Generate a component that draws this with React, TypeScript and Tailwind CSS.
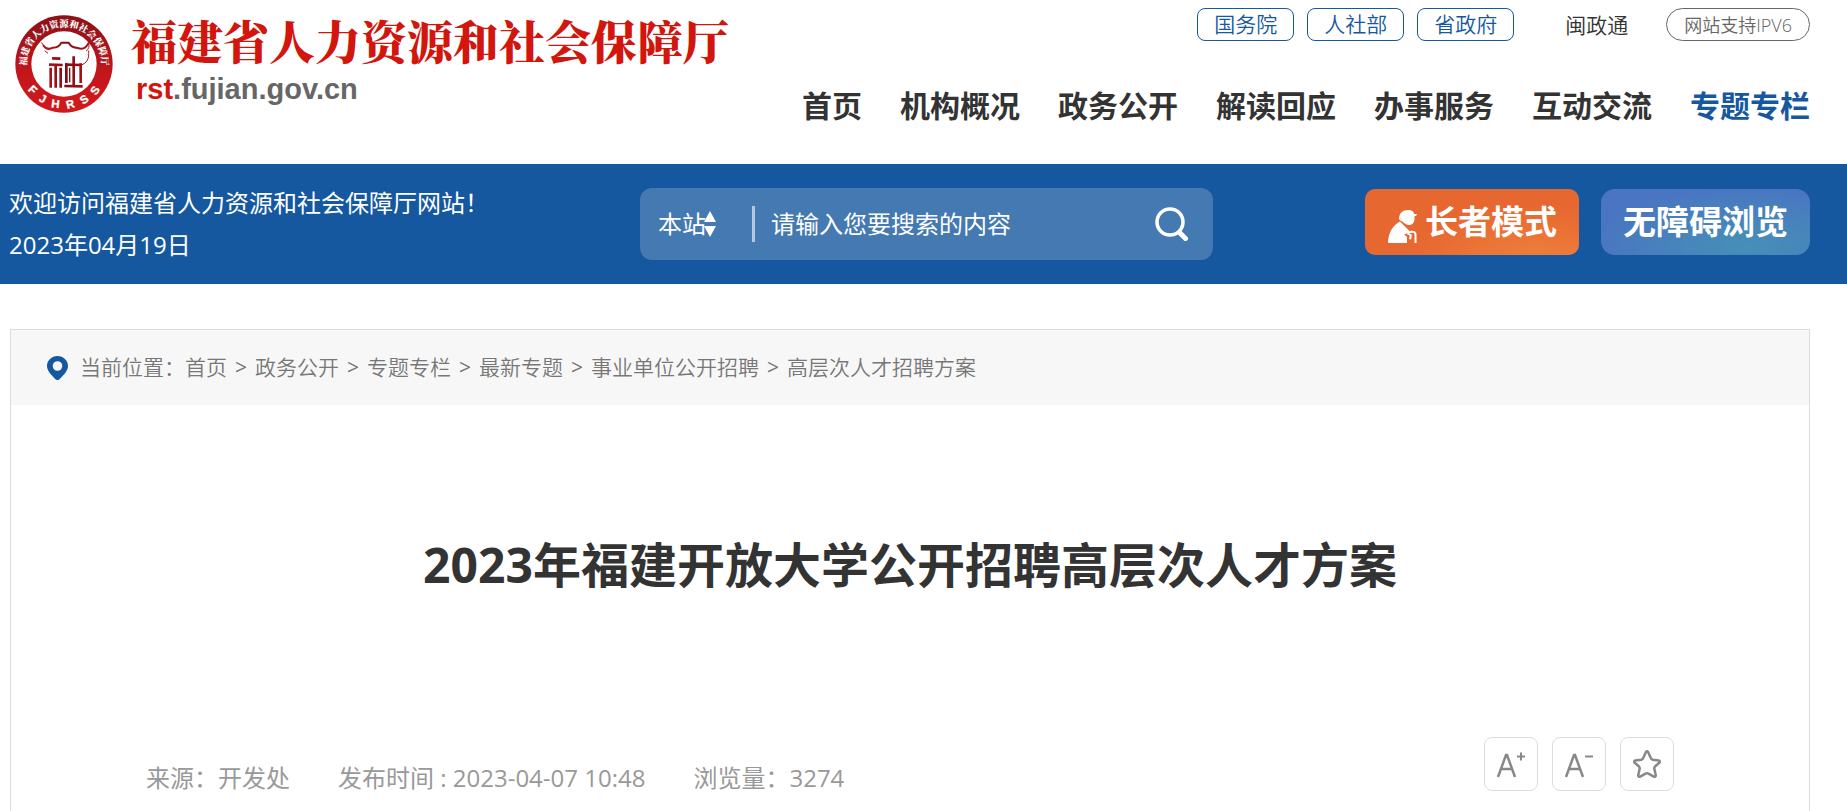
import { useState } from 'react'
import clsx from 'clsx'

const DEPARTMENTS = ['国务院', '人社部', '省政府']

const NAV_ITEMS = ['首页', '机构概况', '政务公开', '解读回应', '办事服务', '互动交流', '专题专栏']

const CRUMBS = ['首页', '政务公开', '专题专栏', '最新专题', '事业单位公开招聘', '高层次人才招聘方案']

const META = ['来源：开发处', '发布时间 : 2023-04-07 10:48', '浏览量：3274']

function Emblem() {
  return (
    <svg viewBox="8 14 294 294" className="size-[98px] shrink-0" aria-hidden="true">
      <defs>
        <linearGradient id="ring" x1="0" y1="0" x2="0" y2="1">
          <stop offset="0" stopColor="#8a1119" />
          <stop offset="0.6" stopColor="#c4161c" />
          <stop offset="1" stopColor="#d01a1c" />
        </linearGradient>
        <linearGradient id="gate" gradientUnits="userSpaceOnUse" x1="85" y1="0" x2="235" y2="0">
          <stop offset="0" stopColor="#c4161c" />
          <stop offset="0.5" stopColor="#7d0d14" />
          <stop offset="1" stopColor="#b3141a" />
        </linearGradient>
        <path id="arc-top" d="M44.700 180.400 A112 112 0 1 1 265.300 180.400" />
        <path id="arc-bottom" d="M22 161 A133 133 0 0 0 288 161" />
      </defs>
      <circle cx="155" cy="161" r="146" fill="url(#ring)" />
      <circle cx="155" cy="161" r="98" fill="#fff" />
      <text fill="#fff" fontSize="28" fontWeight="900" fontFamily="'Noto Serif CJK SC', 'Noto Sans CJK SC', serif">
        <textPath href="#arc-top" startOffset="50%" textAnchor="middle">福建省人力资源和社会保障厅</textPath>
      </text>
      <text fill="#fff" stroke="#fff" strokeWidth="1" fontSize="34" fontWeight="700" fontFamily="'Liberation Sans', sans-serif" letterSpacing="24">
        <textPath href="#arc-bottom" startOffset="53%" textAnchor="middle">FJHRSS</textPath>
      </text>
      {/* Roof */}
      <g fill="none" stroke="url(#gate)" strokeLinecap="round" strokeLinejoin="round">
        <path strokeWidth="6" d="M94 106 C100 116 110 118 122 112 C134 112 143 106 147 97 H169 C174 106 182 112 196 113 C210 118 222 112 228 99" />
        <path strokeWidth="3" d="M88 97 L96 110 M229 97 C232 108 229 117 222 122 M229 122 C231 146 224 158 207 164 M98 122 L106 128" />
      </g>
      {/* Pillars */}
      <g stroke="url(#gate)" strokeWidth="8">
        <line x1="119" y1="144" x2="144" y2="145" />
        <line x1="110" y1="163" x2="151" y2="164" />
        <line x1="115" y1="172" x2="115.1" y2="232" />
        <line x1="130" y1="163" x2="130.1" y2="232" />
        <line x1="145" y1="172" x2="145.1" y2="232" />
        <line x1="162" y1="159" x2="162.1" y2="218" />
        <line x1="184" y1="138" x2="184.1" y2="228" />
        <line x1="205" y1="159" x2="205.1" y2="218" />
        <line x1="158" y1="163" x2="209" y2="164" />
        <line x1="156" y1="227" x2="211" y2="228" />
        <line x1="172" y1="172" x2="172.1" y2="216" strokeWidth="4" />
      </g>
    </svg>
  )
}

function SearchIcon() {
  return (
    <svg viewBox="0 0 34 34" className="size-[34px]" fill="none" stroke="currentColor" aria-hidden="true">
      <circle cx="15" cy="15" r="13" strokeWidth="3.500" />
      <path d="M24.500 25.500 L30.500 31.500" strokeWidth="5" strokeLinecap="round" />
    </svg>
  )
}

function ElderIcon() {
  return (
    <svg viewBox="0 -8 30 42" className="h-[42px] w-[30px]" fill="currentColor" aria-hidden="true">
      <path d="M12 10 C12 4 16 1 21 1 C25 1 27 3 27 5 H30 L29 7 H27.500 V11 C27 14 25 16 22 16 C19 16 17 14 15.500 12.500 L13 11.500 Z" />
      <path d="M13 12.500 C6 16 1 24 1 34 H20 V28 L17 25 C21 25 22 24 22.500 22 Z" />
      <path d="M21.500 26 V24.500 C22 22 28 22 28.500 25 V34 M23.500 25 V29 L22.500 30" fill="none" stroke="currentColor" strokeWidth="2" />
    </svg>
  )
}

function PinIcon() {
  return (
    <svg viewBox="0 0 21 24" className="h-6 w-[21px]" aria-hidden="true">
      <path fill="#15589f" fillRule="evenodd" d="M10.500 0 C4.700 0 0 4.500 0 10 C0 15 4.500 19 8.500 23.200 C9.600 24.300 11.400 24.300 12.500 23.200 C16.500 19 21 15 21 10 C21 4.500 16.300 0 10.500 0 Z M10.500 5.200 A4.800 4.800 0 1 1 10.500 14.800 A4.800 4.800 0 1 1 10.500 5.200 Z" />
    </svg>
  )
}

function FontSizeIcon({ plus }: { plus?: boolean }) {
  return (
    <svg viewBox="0 0 30 28" className="h-7 w-[30px]" fill="none" stroke="#888" strokeWidth="2.500" aria-hidden="true">
      <path d="M2 27 L10 5 H11 L19 27 M5 19 H16" />
      <path d="M21 6.500 H29" strokeWidth="2" />
      {plus && <path d="M25 2.500 V10.500" strokeWidth="2" />}
    </svg>
  )
}

function StarIcon() {
  return (
    <svg viewBox="0 0 28 28" className="size-7" fill="none" stroke="#888" strokeWidth="2.500" strokeLinejoin="round" aria-hidden="true">
      <path d="M12.900 2 Q14 0.500 15.100 2 L17.500 7.500 Q18 9.200 19.700 9.700 L26 10.500 Q27.500 11.300 26.500 12.500 L22 16.500 Q21 17.700 21.400 19 L22.800 25.500 Q22.500 27.200 20.800 26.600 L15.500 23.600 Q14 23 12.500 23.600 L7.200 26.600 Q5.500 27.200 5.200 25.500 L6.600 19 Q7 17.700 6 16.500 L1.500 12.500 Q0.500 11.300 2 10.500 L8.300 9.700 Q10 9.200 10.500 7.500 Z" />
    </svg>
  )
}

export default function App() {
  const [scope, setScope] = useState('本站')
  const [keyword, setKeyword] = useState('')

  return (
    <div className="flex min-h-screen flex-col bg-white font-['Open_Sans','Noto_Sans_CJK_SC',sans-serif] text-[#333]">
      <header className="flex items-start justify-between pr-[37px] pb-9 pl-[15px]">
        <a href="#" className="flex items-start gap-[18px] pt-[15px]">
          <Emblem />
          <span className="flex flex-col gap-[10px]">
            <span className="font-['Noto_Serif_CJK_SC','Noto_Sans_CJK_SC',serif] text-[46px] leading-[48px] font-black whitespace-nowrap text-[#d2150d]">
              福建省人力资源和社会保障厅
            </span>
            <span className="pl-[5px] font-['Liberation_Sans',sans-serif] text-[29px] leading-8 font-bold text-[#666]">
              <span className="text-[#d2150d]">rst</span>.fujian.gov.cn
            </span>
          </span>
        </a>

        <div className="flex flex-col items-end gap-[42px] pt-2">
          <div className="flex items-center text-[21px] font-[350]">
            <div className="flex gap-[13px]">
              {DEPARTMENTS.map(name => (
                <a
                  key={name}
                  href="#"
                  className="flex h-[33px] items-center rounded-lg border border-[#15589f] px-4 text-[#15589f]"
                >
                  {name}
                </a>
              ))}
            </div>
            <a href="#" className="ml-[51px] leading-8">闽政通</a>
            <a
              href="#"
              className="ml-[38px] flex h-[33px] items-center rounded-full border border-[#666] px-[17px] text-lg text-[#666]"
            >
              网站支持IPV6
            </a>
          </div>
          <nav className="flex gap-[38px] text-[30px] leading-[45px] font-bold">
            {NAV_ITEMS.map(item => (
              <a
                key={item}
                href="#"
                className={clsx('whitespace-nowrap', item === '专题专栏' && 'text-[#15589f]')}
              >
                {item}
              </a>
            ))}
          </nav>
        </div>
      </header>

      <section className="flex items-center justify-between bg-[#15589f] py-[18px] pr-[37px] pl-[9px] text-white">
        <div className="flex-1 text-2xl leading-[42px] whitespace-nowrap">
          <p>欢迎访问福建省人力资源和社会保障厅网站！</p>
          <p>2023年04月19日</p>
        </div>

        <form
          className="ml-[34px] flex h-[72px] w-[573px] items-center rounded-xl bg-[#4479b2] pr-6 pl-[18px] text-2xl"
          onSubmit={e => e.preventDefault()}
        >
          <div className="relative w-[94px]">
            <select
              aria-label="搜索范围"
              value={scope}
              onChange={e => setScope(e.target.value)}
              className="w-full appearance-none bg-transparent outline-none"
            >
              <option>本站</option>
            </select>
            <svg
              viewBox="0 0 12 28"
              className="pointer-events-none absolute inset-y-0 left-[46px] my-auto h-7 w-3"
              fill="currentColor"
              aria-hidden="true"
            >
              <path d="M6 1 L12 12 H0 Z M0 16 H12 L6 27 Z" />
            </svg>
          </div>
          <span className="h-9 w-[3px] bg-[#b4c9e0]" />
          <input
            type="text"
            aria-label="搜索内容"
            placeholder="请输入您要搜索的内容"
            value={keyword}
            onChange={e => setKeyword(e.target.value)}
            className="min-w-0 flex-1 bg-transparent pl-4 outline-none placeholder:text-white"
          />
          <button type="submit" aria-label="搜索" className="cursor-pointer">
            <SearchIcon />
          </button>
        </form>

        <div className="mb-1 flex flex-1 justify-end gap-[22px] text-[33px] font-bold">
          <button className="flex h-[66px] cursor-pointer items-center gap-2 rounded-[10px] bg-[radial-gradient(ellipse_at_80%_110%,#ee803c,#e76730_55%)] px-[22px] whitespace-nowrap">
            <ElderIcon />
            长者模式
          </button>
          <button className="h-[66px] cursor-pointer rounded-[14px] bg-[radial-gradient(ellipse_at_70%_85%,#4690b6,#4975c2_75%)] px-[22px] whitespace-nowrap">
            无障碍浏览
          </button>
        </div>
      </section>

      <main className="mt-[45px] mr-[37px] ml-[10px] flex-1 border border-b-0 border-[#ddd]">
        <div className="flex items-center gap-3 bg-[#f7f7f7] px-9 py-[21px] text-[21px] leading-[33px] font-[350] text-[#777]">
          <PinIcon />
          <div className="flex">
            <span>当前位置：</span>
            <ol className="flex">
              {CRUMBS.map((crumb, i) => (
                <li key={crumb} className="flex">
                  {i > 0 && <span className="w-7 text-center font-normal">&gt;</span>}
                  <a href="#">{crumb}</a>
                </li>
              ))}
            </ol>
          </div>
        </div>

        <article className="px-[135px] pt-[124px]">
          <h1 className="text-center text-5xl leading-[72px] font-bold">
            2023年福建开放大学公开招聘高层次人才方案
          </h1>
          <div className="flex items-center justify-between pt-[131px]">
            <div className="flex gap-12 pt-7 text-2xl leading-9 text-[#999]">
              {META.map(item => (
                <span key={item}>{item}</span>
              ))}
            </div>
            <div className="flex gap-[14px]">
              <button aria-label="放大字体" className="grid size-[54px] cursor-pointer place-items-center rounded-lg border border-[#ddd]">
                <FontSizeIcon plus />
              </button>
              <button aria-label="缩小字体" className="grid size-[54px] cursor-pointer place-items-center rounded-lg border border-[#ddd]">
                <FontSizeIcon />
              </button>
              <button aria-label="收藏" className="grid size-[54px] cursor-pointer place-items-center rounded-lg border border-[#ddd]">
                <StarIcon />
              </button>
            </div>
          </div>
        </article>
      </main>
    </div>
  )
}
